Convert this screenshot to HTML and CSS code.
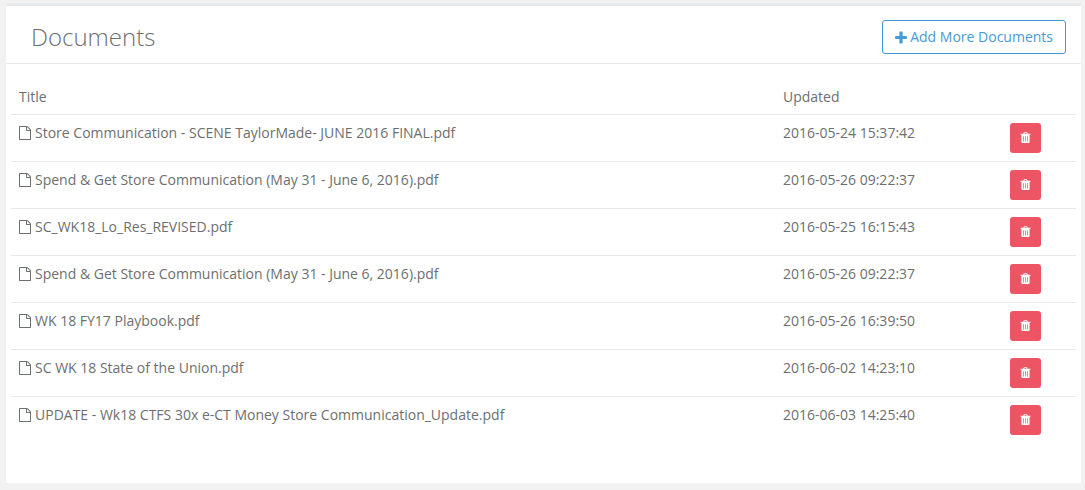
FILE: index.html
```html
<!DOCTYPE html>
<html lang="en">
<head>
<meta charset="utf-8">
<title>Documents</title>
<link rel="stylesheet" href="styles.css">
</head>
<body>
<svg class="sprite" aria-hidden="true">
  <symbol id="file" viewBox="0 0 1536 1792"><path d="M1468 380q28 28 48 76t20 88v1152q0 40-28 68t-68 28h-1344q-40 0-68-28t-28-68v-1600q0-40 28-68t68-28h896q40 0 88 20t76 48zm-444-244v376h376q-10-29-22-41l-313-313q-12-12-41-22zm384 1528v-1024h-416q-40 0-68-28t-28-68v-416h-768v1536h1280z"/></symbol>
  <symbol id="plus" viewBox="0 0 1408 1792"><path d="M1408 800v192q0 40-28 68t-68 28h-416v416q0 40-28 68t-68 28h-192q-40 0-68-28t-28-68v-416h-416q-40 0-68-28t-28-68v-192q0-40 28-68t68-28h416v-416q0-40 28-68t68-28h192q40 0 68 28t28 68v416h416q40 0 68 28t28 68z"/></symbol>
  <symbol id="trash" viewBox="0 0 11 12"><path fill-rule="evenodd" d="M3.2 1.7L3.8 .6Q4 .2 4.5 .2h2Q7 .2 7.2 .6l.6 1.1h2.7v1.1H9.6v7.2q0 1-.9 1H2.3q-.9 0-.9-1V2.8H.5V1.7zM4.3 1.7h2.4l-.3-.7H4.6zM3.2 4.2v5.2h.7V4.2zM5.15 4.2v5.2h.7V4.2zM7.1 4.2v5.2h.7V4.2z"/></symbol>
</svg>
<main class="panel">
  <header class="panel-header">
    <h1 class="panel-title">Documents</h1>
    <button class="add-button"><svg class="icon-plus"><use href="#plus"/></svg><span>Add More Documents</span></button>
  </header>
  <section class="table">
    <div class="row head"><span>Title</span><span>Updated</span></div>
    <div class="row"><span class="name"><svg class="icon-file"><use href="#file"/></svg>Store Communication - SCENE TaylorMade- JUNE 2016 FINAL.pdf</span><span>2016-05-24 15:37:42</span><button class="delete" aria-label="Delete"><svg class="icon-trash"><use href="#trash"/></svg></button></div>
    <div class="row"><span class="name"><svg class="icon-file"><use href="#file"/></svg>Spend &amp; Get Store Communication (May 31 - June 6, 2016).pdf</span><span>2016-05-26 09:22:37</span><button class="delete" aria-label="Delete"><svg class="icon-trash"><use href="#trash"/></svg></button></div>
    <div class="row"><span class="name"><svg class="icon-file"><use href="#file"/></svg>SC_WK18_Lo_Res_REVISED.pdf</span><span>2016-05-25 16:15:43</span><button class="delete" aria-label="Delete"><svg class="icon-trash"><use href="#trash"/></svg></button></div>
    <div class="row"><span class="name"><svg class="icon-file"><use href="#file"/></svg>Spend &amp; Get Store Communication (May 31 - June 6, 2016).pdf</span><span>2016-05-26 09:22:37</span><button class="delete" aria-label="Delete"><svg class="icon-trash"><use href="#trash"/></svg></button></div>
    <div class="row"><span class="name"><svg class="icon-file"><use href="#file"/></svg>WK 18 FY17 Playbook.pdf</span><span>2016-05-26 16:39:50</span><button class="delete" aria-label="Delete"><svg class="icon-trash"><use href="#trash"/></svg></button></div>
    <div class="row"><span class="name"><svg class="icon-file"><use href="#file"/></svg>SC WK 18 State of the Union.pdf</span><span>2016-06-02 14:23:10</span><button class="delete" aria-label="Delete"><svg class="icon-trash"><use href="#trash"/></svg></button></div>
    <div class="row"><span class="name"><svg class="icon-file"><use href="#file"/></svg>UPDATE - Wk18 CTFS 30x e-CT Money Store Communication_Update.pdf</span><span>2016-06-03 14:25:40</span><button class="delete" aria-label="Delete"><svg class="icon-trash"><use href="#trash"/></svg></button></div>
  </section>
</main>
</body>
</html>
```

FILE: styles.css
```css
* { box-sizing: border-box; }

body {
  margin: 0;
  padding: 3px 4px 0 6px;
  background: #f2f2f2;
  color: #6c6f71;
  font: 14px/20px "Open Sans", "Noto Sans", sans-serif;
}

.sprite { display: none; }
svg { fill: currentColor; flex: none; }

.panel {
  height: 480px;
  background: #fff;
  border-top: 3px solid #e7eaec;
}

.panel-header {
  display: flex;
  align-items: flex-start;
  justify-content: space-between;
  height: 58px;
  padding: 14px 15px 0 25px;
  border-bottom: 1px solid #e7eaec;
}

.panel-title {
  margin: 0;
  font-size: 24px;
  font-weight: 300;
  line-height: 34px;
}

.add-button {
  display: flex;
  align-items: center;
  gap: 3px;
  height: 34px;
  padding: 0 12px;
  border: 1px solid #3f97d5;
  border-radius: 3px;
  background: #fff;
  color: #479bd6;
  font: inherit;
}

.icon-plus { width: 12px; height: 15px; }

.table { padding: 15px 5px 0; }

.row {
  display: grid;
  grid-template-columns: 764px 227px 31px;
  height: 47px;
  padding: 8px;
  border-top: 1px solid #e7eaec;
}

.head {
  height: 35px;
  border-top: 0;
}

.name {
  display: flex;
  gap: 4px;
}

.icon-file { width: 12px; height: 14px; margin-top: 3px; }

.delete {
  display: grid;
  place-items: center;
  width: 31px;
  height: 30px;
  padding: 0;
  border: 0;
  border-radius: 3px;
  background: #ed5565;
  color: #fff;
}

.icon-trash { width: 11px; height: 12px; }
```
